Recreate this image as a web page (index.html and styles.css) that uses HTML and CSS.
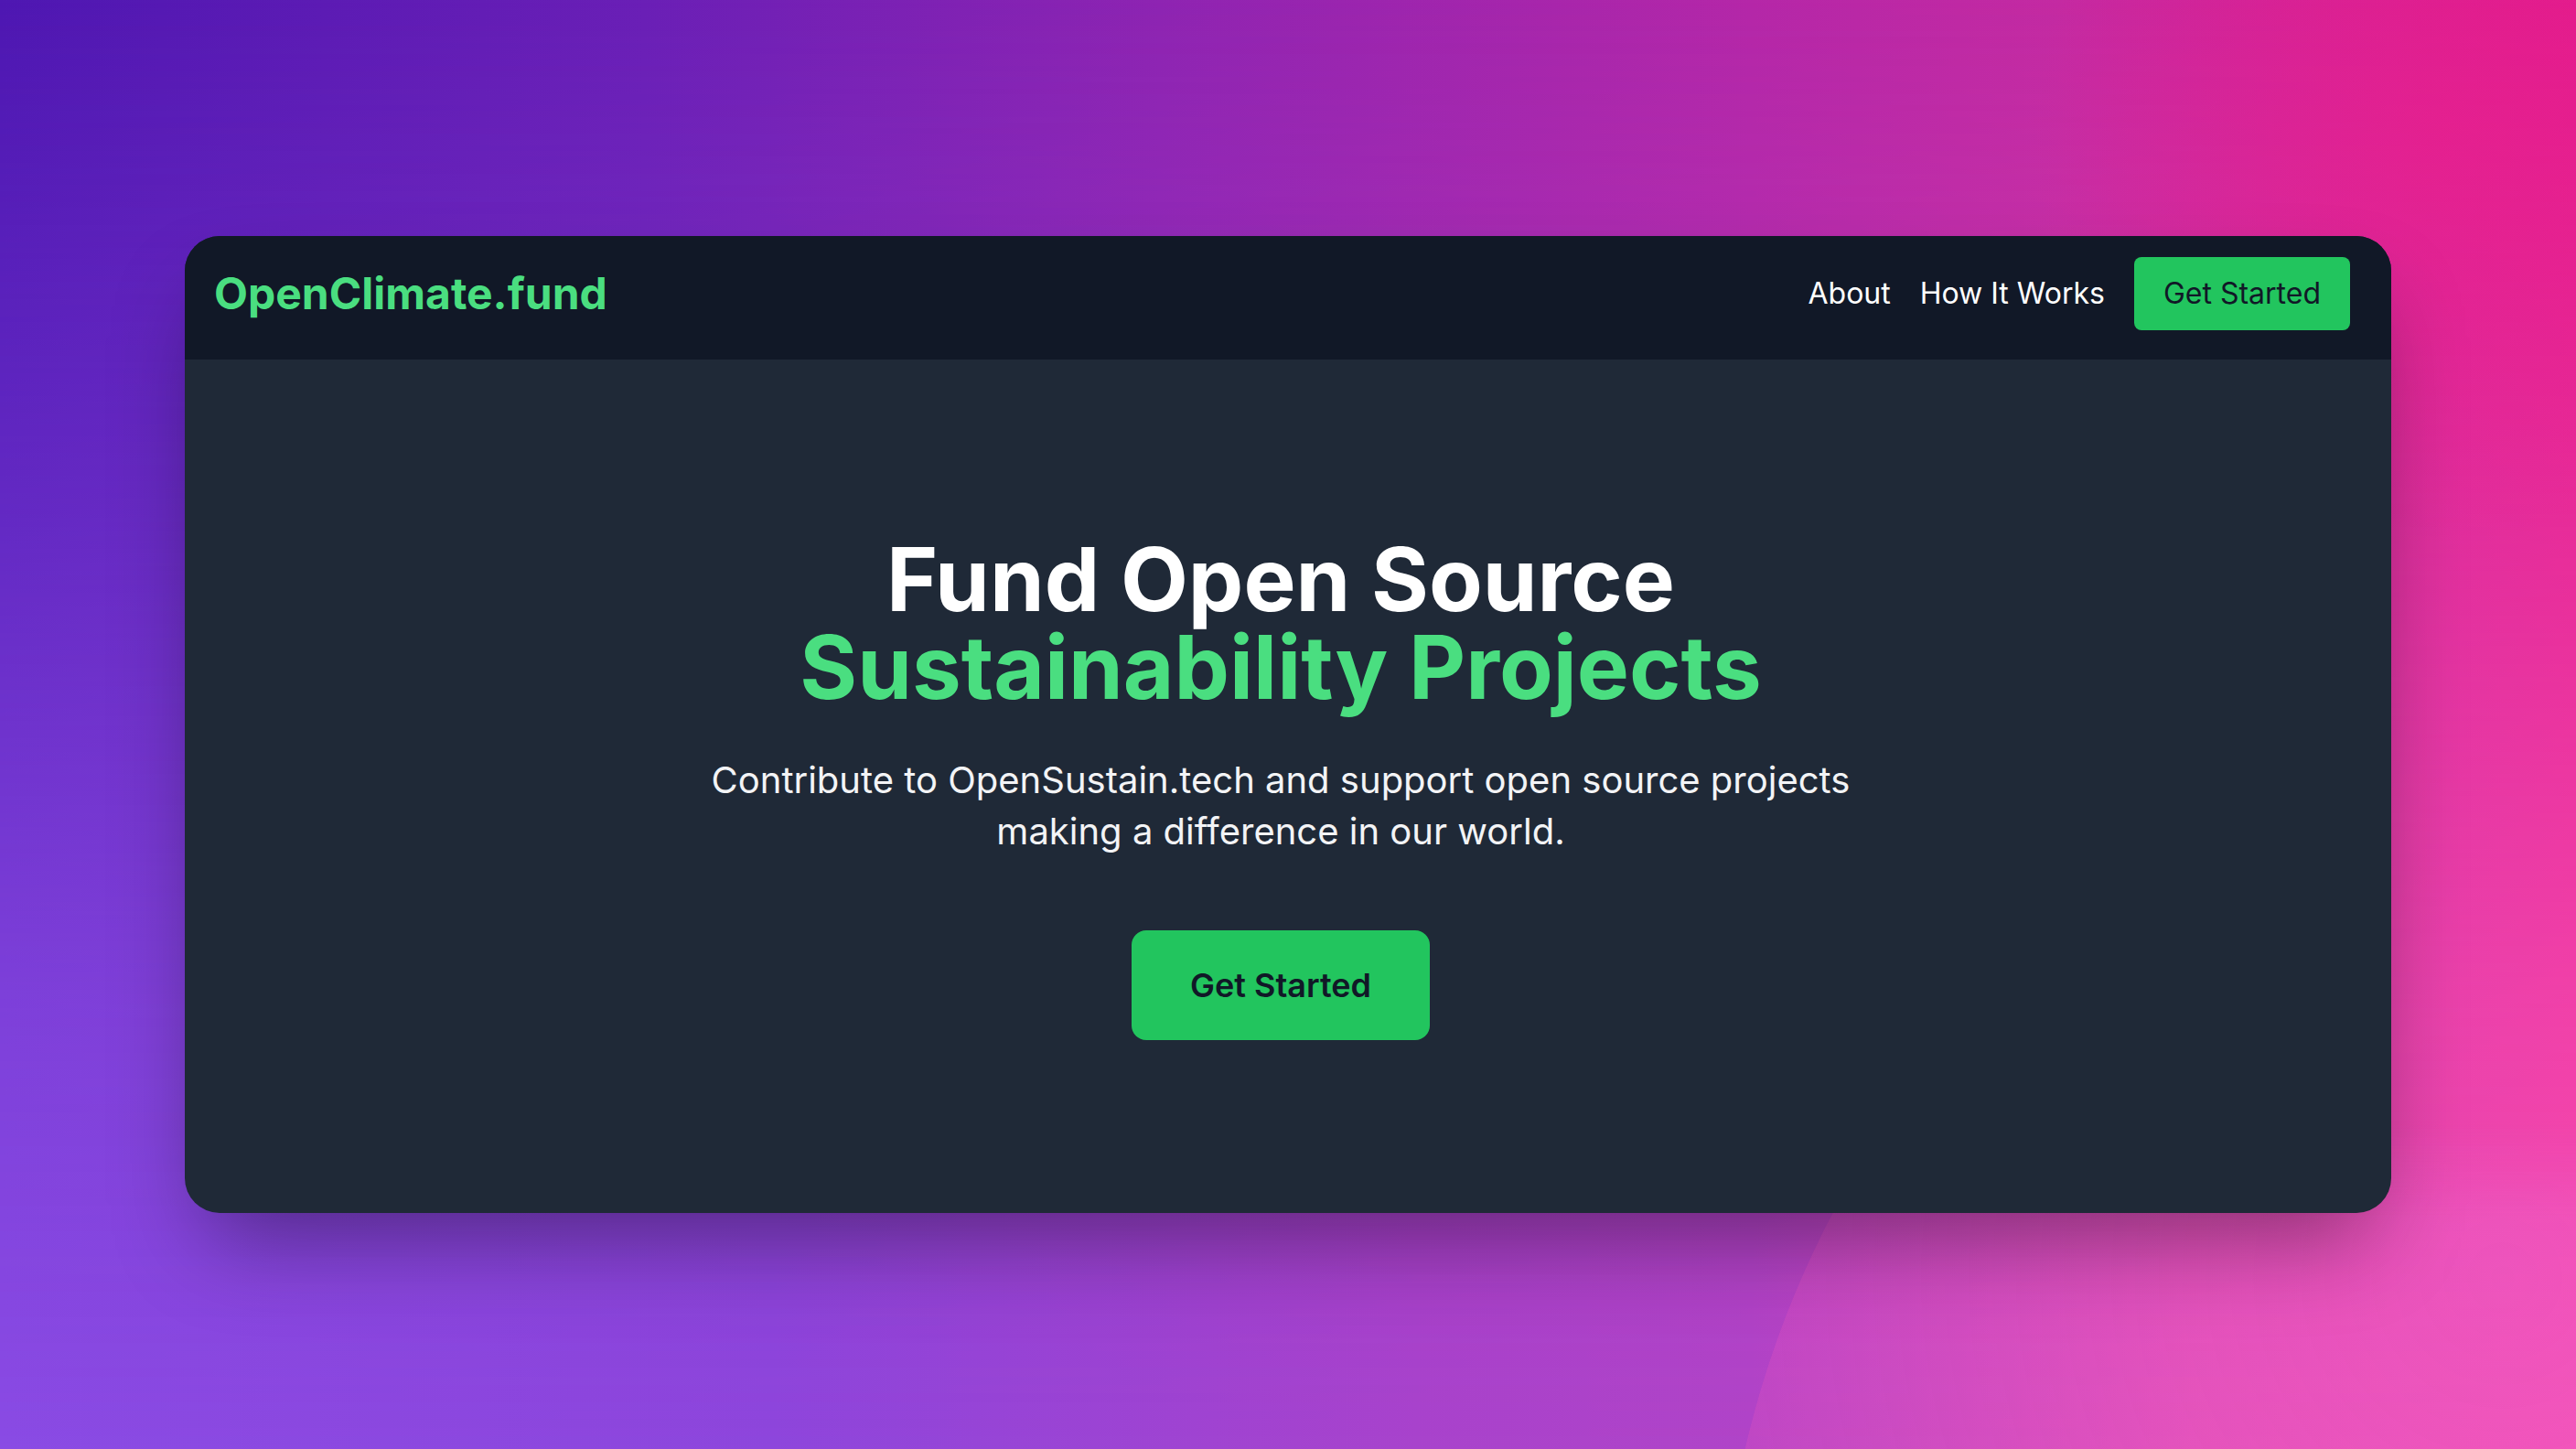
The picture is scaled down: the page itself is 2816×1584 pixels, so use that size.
FILE: index.html
```html
<!DOCTYPE html>
<html lang="en">
<head>
<meta charset="utf-8">
<title>OpenClimate.fund</title>
<link rel="stylesheet" href="styles.css">
</head>
<body>
<div class="backdrop"><div class="blob-top"></div><div class="blob-circle"></div></div>
<main class="card">
  <header class="nav">
    <a class="logo" href="#">OpenClimate.fund</a>
    <nav class="links">
      <a class="link" href="#">About</a>
      <a class="link" href="#">How It Works</a>
      <a class="nav-btn" href="#">Get Started</a>
    </nav>
  </header>
  <section class="hero">
    <h1 class="title"><span class="line">Fund Open Source</span><span class="line accent">Sustainability Projects</span></h1>
    <p class="lead">Contribute to OpenSustain.tech and support open source projects making a difference in our world.</p>
    <a class="cta" href="#">Get Started</a>
  </section>
</main>
</body>
</html>
```

FILE: styles.css
```css
* { box-sizing: border-box; }
html, body { margin: 0; padding: 0; }
body {
  height: 100vh;
  display: flex;
  align-items: center;
  justify-content: center;
  font-family: Inter, "Noto Sans", "DejaVu Sans", sans-serif;
  overflow: hidden;
  position: relative;
  background: linear-gradient(to right, #4e17b2 0%, #6a1fb6 25%, #8e24b2 45%, #b527a8 68%, #c42aa2 80%, #e01b8c 100%);
}
.backdrop {
  position: absolute;
  inset: 0;
  z-index: 0;
  overflow: hidden;
  pointer-events: none;
}
.backdrop::before {
  content: "";
  position: absolute;
  inset: 0;
  background: linear-gradient(to right, #8a4be4 0%, #8e46dc 30%, #a843cc 55%, #b044c8 68%, #e04cb6 85%, #f54bb0 100%);
  -webkit-mask-image: linear-gradient(to bottom, transparent 0%, rgba(0,0,0,0.35) 35%, rgba(0,0,0,0.8) 70%, #000 100%);
  mask-image: linear-gradient(to bottom, transparent 0%, rgba(0,0,0,0.35) 35%, rgba(0,0,0,0.8) 70%, #000 100%);
}
.blob-top {
  position: absolute;
  right: -300px;
  top: -300px;
  width: 900px;
  height: 900px;
  border-radius: 50%;
  background: radial-gradient(circle, rgba(236, 30, 140, 0.55) 0%, rgba(236, 30, 140, 0) 70%);
}
.blob-circle {
  position: absolute;
  left: 1880px;
  top: 755px;
  width: 2140px;
  height: 2140px;
  border-radius: 50%;
  background: radial-gradient(circle at 40% 30%, rgba(235, 110, 215, 0.35), rgba(250, 80, 180, 0.2) 50%);
  -webkit-mask-image: linear-gradient(to bottom, transparent 0%, transparent 22%, #000 27%);
  mask-image: linear-gradient(to bottom, transparent 0%, transparent 22%, #000 27%);
}
.card {
  position: relative;
  z-index: 1;
  width: 2412px;
  background: #1f2937;
  border-radius: 38px;
  overflow: hidden;
  box-shadow: 0 50px 100px -24px rgba(0, 0, 0, 0.4);
}
.nav {
  height: 135px;
  background: #111827;
  display: flex;
  align-items: center;
  justify-content: space-between;
  padding: 0 45px 9px 32px;
}
.logo {
  font-size: 48px;
  line-height: 64px;
  font-weight: 700;
  color: #4ade80;
  text-decoration: none;
}
.links {
  display: flex;
  align-items: center;
  gap: 32px;
}
.link {
  font-size: 32px;
  line-height: 48px;
  color: #ffffff;
  text-decoration: none;
}
.nav-btn {
  font-size: 32px;
  line-height: 48px;
  padding: 16px 32px;
  background: #22c55e;
  color: #111827;
  border-radius: 8px;
  text-decoration: none;
}
.hero {
  display: flex;
  flex-direction: column;
  align-items: center;
  text-align: center;
  padding: 192px 16px 189px 0;
}
.title {
  margin: 0 0 48px;
  display: flex;
  flex-direction: column;
  align-items: center;
  font-size: 96px;
  line-height: 96px;
  font-weight: 700;
  color: #ffffff;
}
.line { display: block; }
.accent { color: #4ade80; }
.lead {
  margin: 0 0 80px;
  max-width: 1344px;
  font-size: 40px;
  line-height: 56px;
  color: #f3f4f6;
}
.cta {
  display: inline-block;
  padding: 32px 64px;
  font-size: 36px;
  line-height: 56px;
  font-weight: 600;
  background: #22c55e;
  color: #111827;
  border-radius: 16px;
  text-decoration: none;
}
```
